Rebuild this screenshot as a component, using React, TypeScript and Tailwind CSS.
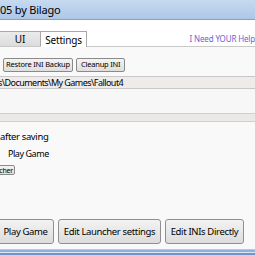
import React from "react";

const font = { fontFamily: '"Noto Sans", "Open Sans", sans-serif' };

const smallBtn =
	"h-[14px] rounded-[2px] border border-[#8a8a8a] bg-gradient-to-b from-[#f4f4f4] to-[#dedede] text-[7.5px] tracking-[-0.2px] leading-none whitespace-nowrap";
const bigBtn =
	"h-[25px] rounded-[3px] border border-[#8f8f8f] bg-gradient-to-b from-[#f3f3f3] to-[#dcdcdc] text-[9.5px] tracking-[-0.35px] leading-none whitespace-nowrap";

export default function App() {
	return (
		<div
			className="w-[255px] h-[255px] overflow-hidden flex flex-col bg-[#f9f9f9] text-black"
			style={font}
		>
			<div className="h-[20px] shrink-0 flex items-center bg-gradient-to-b from-[#c7daf0] to-[#adc7e7] border-b border-[#8aa2bf]">
				<span className="text-[11px] leading-none tracking-[-0.2px] whitespace-nowrap">05 by Bilago</span>
			</div>
			<div className="h-[11px] shrink-0 bg-white" />
			<div className="h-[16px] shrink-0 flex items-end bg-white border-b border-[#c9c9c9]">
				<div className="w-[41px] h-[15px] flex items-center justify-center bg-gradient-to-b from-[#ebebeb] to-[#dcdcdc] border-t border-r border-[#a8a8a8] text-[10px] leading-none">
					UI
				</div>
				<div className="w-[46px] h-[16px] flex items-center justify-center bg-white border-t border-r border-[#a8a8a8] text-[10px] tracking-[-0.2px] leading-none -mb-px">
					Settings
				</div>
				<div className="flex-1 flex justify-end items-center h-[16px] overflow-hidden">
					<span className="text-[8px] leading-none tracking-[-0.15px] text-[#6b5fd6] whitespace-nowrap pt-[2px]">
						I Need YOUR Help
					</span>
				</div>
			</div>
			<div className="pt-[11px] px-[3px] flex gap-[3px] shrink-0">
				<button className={`${smallBtn} px-[2px]`}>Restore INI Backup</button>
				<button className={`${smallBtn} px-[4px]`}>Cleanup INI</button>
			</div>
			<div className="mt-[4px] h-[13px] shrink-0 flex items-center border-y border-[#c8c6c6] bg-[#efebeb] overflow-hidden">
				<span className="text-[9px] tracking-[-0.55px] leading-none whitespace-nowrap -ml-[2px]">
					s\Documents\My Games\Fallout4
				</span>
			</div>
			<div className="h-[24px] shrink-0 bg-[#f7f7f7]" />
			<div className="h-[9px] shrink-0 bg-[#ebe8e8] border-y border-[#cfcfcf]" />
			<div className="pt-[6px] flex flex-col shrink-0">
				<span className="h-[17px] flex items-center text-[9.5px] tracking-[-0.35px] leading-none whitespace-nowrap">
					after saving
				</span>
				<span className="h-[17px] flex items-center pl-[8px] text-[9px] tracking-[-0.45px] leading-none whitespace-nowrap">
					Play Game
				</span>
				<div className="mt-[3px] w-[15px] h-[10px] flex justify-end overflow-hidden">
					<button className="shrink-0 h-[10px] px-[1px] rounded-[2px] border border-[#8a8a8a] bg-gradient-to-b from-[#f4f4f4] to-[#dedede] text-[7px] tracking-[-0.2px] leading-none whitespace-nowrap">
						Launcher
					</button>
				</div>
			</div>
			<div className="flex-1" />
			<div className="flex gap-[4px] shrink-0">
				<button className={`${bigBtn} -ml-[10px] w-[64px] pl-[7px]`}>Play Game</button>
				<button className={`${bigBtn} w-[103px]`}>Edit Launcher settings</button>
				<button className={`${bigBtn} w-[79px]`}>Edit INIs Directly</button>
			</div>
			<div className="h-[5px] shrink-0" />
			<div className="h-[1px] shrink-0 bg-[#bfc6cf]" />
			<div className="h-[2px] shrink-0 bg-[#8fb0da]" />
			<div className="h-[1px] shrink-0 bg-[#dbe6f4]" />
			<div className="h-[2px] shrink-0 bg-[#6f95c8]" />
		</div>
	);
}
